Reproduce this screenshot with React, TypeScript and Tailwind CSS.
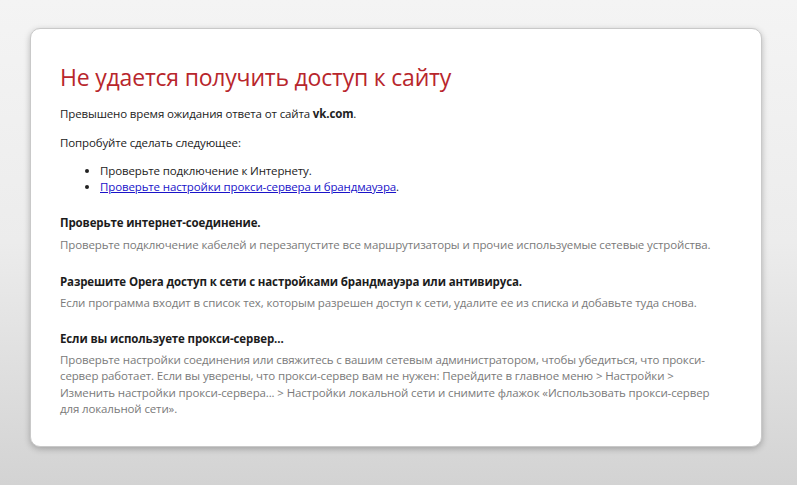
export default function App() {
  const font = { fontFamily: '"Open Sans", "Noto Sans", sans-serif' };

  return (
    <div
      className="w-[797px] h-[485px] bg-gradient-to-b from-[#f4f4f4] via-[#ececec] to-[#d3d3d3] pt-[28px] pl-[30px]"
      style={font}
    >
      <div className="w-[732px] h-[419px] bg-white rounded-[10px] border border-[#c9c9c9] shadow-[0_2px_6px_rgba(0,0,0,0.25)] pl-[29px] pr-[30px] pt-[33px]">
        <h1 className="text-[23px] leading-[30px] text-[#b8262c] tracking-[-0.2px]">
          Не удается получить доступ к сайту
        </h1>

        <div className="text-[11.5px] leading-[16px] text-[#222] tracking-[-0.13px]">
          <p className="mt-[14px]">
            Превышено время ожидания ответа от сайта <b>vk.com</b>.
          </p>
          <p className="mt-[13px]">Попробуйте сделать следующее:</p>
          <ul className="mt-[12px] pl-[40px] list-disc">
            <li>Проверьте подключение к Интернету.</li>
            <li>
              <a href="#" className="text-[#1a13c9] underline">
                Проверьте настройки прокси-сервера и брандмауэра
              </a>
              .
            </li>
          </ul>

          <h2 className="mt-[20px] font-bold text-[#1c1c1c]">Проверьте интернет-соединение.</h2>
          <p className="mt-[6px] text-[#7a7a7a]">
            Проверьте подключение кабелей и перезапустите все маршрутизаторы и прочие используемые сетевые устройства.
          </p>

          <h2 className="mt-[21px] font-bold text-[#1c1c1c]">
            Разрешите Opera доступ к сети с настройками брандмауэра или антивируса.
          </h2>
          <p className="mt-[5px] text-[#7a7a7a]">
            Если программа входит в список тех, которым разрешен доступ к сети, удалите ее из списка и добавьте туда снова.
          </p>

          <h2 className="mt-[20px] font-bold text-[#1c1c1c]">Если вы используете прокси-сервер...</h2>
          <p className="mt-[5px] w-[656px] text-[#7a7a7a] leading-[16.4px]">
            Проверьте настройки соединения или свяжитесь с вашим сетевым администратором, чтобы убедиться, что прокси-сервер
            работает. Если вы уверены, что прокси-сервер вам не нужен: Перейдите в главное меню &gt; Настройки &gt; Изменить
            настройки прокси-сервера... &gt; Настройки локальной сети и снимите флажок «Использовать прокси-сервер для
            локальной сети».
          </p>
        </div>
      </div>
    </div>
  );
}
